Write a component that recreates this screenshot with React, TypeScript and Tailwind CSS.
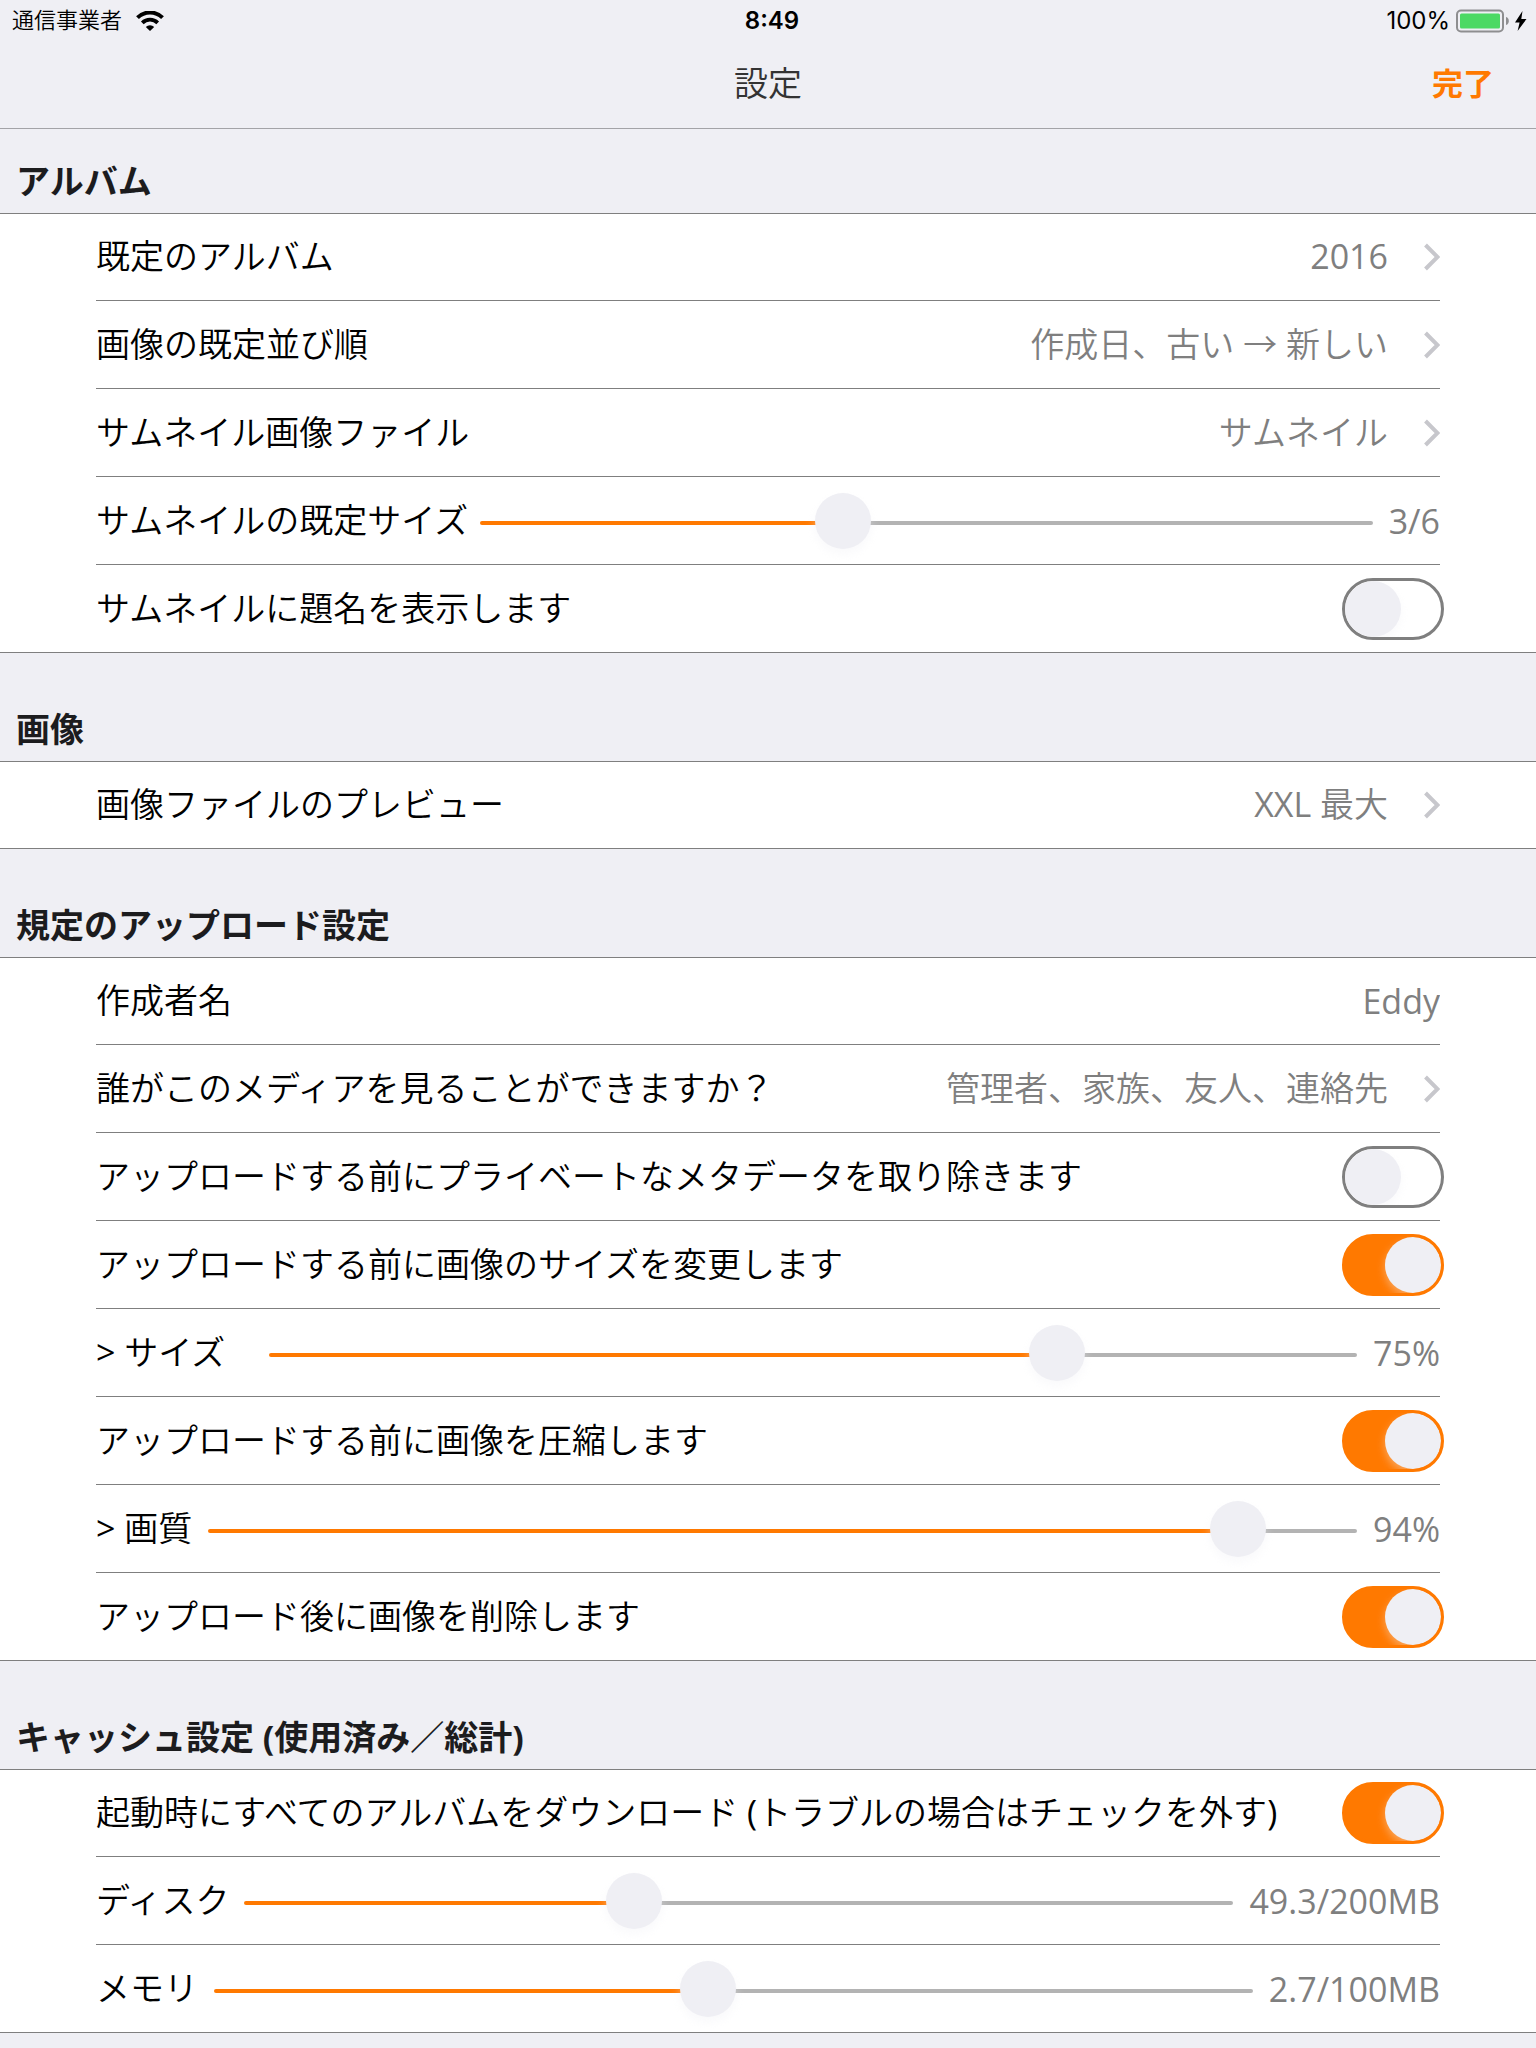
import { useId, useState } from "react";
import type { CSSProperties, ReactNode } from "react";

const rowClass =
  "flex min-h-[88px] w-full items-center border-t border-[#7f7f7f] first:min-h-[86px] first:border-t-0";
const labelClass = "pb-0.5 font-[350]";

/* Japanese glyphs use a demi-light weight; Latin runs stay regular. */
function Mixed({ text }: { text: string }) {
  return (
    <>
      {text.split(/([!-~]+)/).map((part, i) =>
        i % 2 ? (
          <span key={i} className="font-normal">
            {part}
          </span>
        ) : (
          part
        ),
      )}
    </>
  );
}

function Section({ title, first = false, children }: { title: string; first?: boolean; children: ReactNode }) {
  return (
    <section>
      <h2
        className={`border-b border-[#7f7f7f] px-4 pb-2 text-[34px] leading-12 font-bold text-[#1c1c1e] ${
          first ? "pt-7" : "pt-13"
        }`}
      >
        {title}
      </h2>
      <div className="border-b border-[#7f7f7f] bg-white px-24">{children}</div>
    </section>
  );
}

function Chevron() {
  return (
    <svg className="ml-9 h-7 w-4 shrink-0" viewBox="0 0 16 28" fill="none" aria-hidden="true">
      <path d="M1.500 2 13.500 14 1.500 26" stroke="#c7c7cc" strokeWidth="4" />
    </svg>
  );
}

function LinkRow({ label, value }: { label: string; value: string }) {
  return (
    <button type="button" className={`${rowClass} text-left`}>
      <span className={`flex-1 ${labelClass}`}>
        <Mixed text={label} />
      </span>
      <span className="pb-0.5 font-[350] text-[#7f7f7f]">
        <Mixed text={value} />
      </span>
      <Chevron />
    </button>
  );
}

function TextRow({ label, initial }: { label: string; initial: string }) {
  const id = useId();
  const [value, setValue] = useState(initial);
  return (
    <div className={rowClass}>
      <label htmlFor={id} className={labelClass}>
        <Mixed text={label} />
      </label>
      <input
        id={id}
        type="text"
        value={value}
        onChange={(e) => setValue(e.target.value)}
        className="min-w-0 flex-1 bg-transparent text-right text-[#7f7f7f] outline-none"
      />
    </div>
  );
}

function SwitchRow({ label, on = false }: { label: string; on?: boolean }) {
  const id = useId();
  return (
    <div className={rowClass}>
      <label htmlFor={id} className={`flex-1 ${labelClass}`}>
        <Mixed text={label} />
      </label>
      <input
        id={id}
        type="checkbox"
        role="switch"
        defaultChecked={on}
        className="-mr-1 flex h-[62px] w-[102px] shrink-0 appearance-none overflow-hidden rounded-full border-3 border-[#7f7f7f] bg-white before:size-14 before:rounded-full before:bg-[#efeff4] before:shadow-[0_4px_8px_rgba(239,239,244,0.4)] before:content-[''] checked:justify-end checked:border-[#ff7900] checked:bg-[#ff7900]"
      />
    </div>
  );
}

type SliderProps = {
  label: string;
  min: number;
  max: number;
  initial: number;
  format: (v: number) => string;
  gap?: string;
};

function SliderRow({ label, min, max, initial, format, gap = "ml-3.5" }: SliderProps) {
  const id = useId();
  const [value, setValue] = useState(initial);
  const style = { "--f": (value - min) / (max - min) } as CSSProperties;
  return (
    <div className={rowClass}>
      <label htmlFor={id} className={labelClass}>
        <Mixed text={label} />
      </label>
      <input
        id={id}
        type="range"
        min={min}
        max={max}
        value={value}
        onChange={(e) => setValue(Number(e.target.value))}
        style={style}
        className={`${gap} mt-1 mr-4 h-14 min-w-0 flex-1 appearance-none bg-transparent [&::-webkit-slider-runnable-track]:h-1 [&::-webkit-slider-runnable-track]:rounded-full [&::-webkit-slider-runnable-track]:bg-[linear-gradient(to_right,#ff7900_calc(28px+var(--f)*(100%-56px)),#b3b3b3_calc(28px+var(--f)*(100%-56px)))] [&::-webkit-slider-thumb]:-mt-7 [&::-webkit-slider-thumb]:size-14 [&::-webkit-slider-thumb]:appearance-none [&::-webkit-slider-thumb]:rounded-full [&::-webkit-slider-thumb]:bg-[#efeff4] [&::-webkit-slider-thumb]:shadow-[0_5px_10px_rgba(239,239,244,0.4)]`}
      />
      <output htmlFor={id} className="text-[#7f7f7f]">
        {format(value)}
      </output>
    </div>
  );
}

function StatusBar() {
  return (
    <div className="grid h-10 grid-cols-3 items-center pt-0.5 pr-2 pl-3 font-['Inter','Noto_Sans_CJK_JP',sans-serif] text-2xl text-black">
      <div className="flex items-center gap-3.5">
        <span className="text-[22px] font-[350]">通信事業者</span>
        <svg className="h-5 w-7" viewBox="0 0 28 20" fill="none" aria-label="Wi-Fi">
          <path d="M1.500 6.600a17.800 17.800 0 0 1 25 0" stroke="#000" strokeWidth="4" />
          <path d="M6.300 11.800a11 11 0 0 1 15.400 0" stroke="#000" strokeWidth="3.800" />
          <path d="M14 20l-4.200-4.100a6 6 0 0 1 8.400 0z" fill="#000" />
        </svg>
      </div>
      <span className="pl-1 text-center font-semibold">8:49</span>
      <div className="flex items-center justify-end gap-1.5">
        <span>100%</span>
        <svg className="h-6 w-[72px]" viewBox="0 0 72 24" aria-label="Battery">
          <rect x="1" y="1.500" width="46" height="21" rx="4" fill="none" stroke="#8e8e90" strokeWidth="2" />
          <rect x="4" y="4.500" width="40" height="15" rx="1.500" fill="#4cd964" />
          <path d="M50 8c3.800 1 3.800 7 0 8z" fill="#8e8e90" />
          <path d="M66.500 2 59 13.500h4.600l-2 8.500L70.500 10h-5.200z" fill="#000" />
        </svg>
      </div>
    </div>
  );
}

export default function App() {
  return (
    <main
      lang="ja"
      className="min-h-screen bg-[#efeff4] font-['Open_Sans','Noto_Sans_CJK_JP',sans-serif] text-[34px] leading-12 text-black"
    >
      <header className="border-b border-[#a3a3a7]">
        <StatusBar />
        <div className="grid h-22 grid-cols-3 items-center px-11 pb-0.5">
          <h1 className="col-start-2 text-center font-[350] text-[#333333]">設定</h1>
          <button type="button" className="-mr-0.5 justify-self-end text-[31px] font-semibold text-[#ff7900]">
            完了
          </button>
        </div>
      </header>

      <Section title="アルバム" first>
        <LinkRow label="既定のアルバム" value="2016" />
        <LinkRow label="画像の既定並び順" value="作成日、古い → 新しい" />
        <LinkRow label="サムネイル画像ファイル" value="サムネイル" />
        <SliderRow label="サムネイルの既定サイズ" min={1} max={6} initial={3} format={(v) => `${v}/6`} gap="ml-3" />
        <SwitchRow label="サムネイルに題名を表示します" />
      </Section>

      <Section title="画像">
        <LinkRow label="画像ファイルのプレビュー" value="XXL 最大" />
      </Section>

      <Section title="規定のアップロード設定">
        <TextRow label="作成者名" initial="Eddy" />
        <LinkRow label="誰がこのメディアを見ることができますか？" value="管理者、家族、友人、連絡先" />
        <SwitchRow label="アップロードする前にプライベートなメタデータを取り除きます" />
        <SwitchRow label="アップロードする前に画像のサイズを変更します" on />
        <SliderRow label="> サイズ" min={5} max={100} initial={75} format={(v) => `${v}%`} gap="ml-11" />
        <SwitchRow label="アップロードする前に画像を圧縮します" on />
        <SliderRow label="> 画質" min={50} max={98} initial={94} format={(v) => `${v}%`} gap="ml-4" />
        <SwitchRow label="アップロード後に画像を削除します" on />
      </Section>

      <Section title="キャッシュ設定 (使用済み／総計)">
        <SwitchRow label="起動時にすべてのアルバムをダウンロード (トラブルの場合はチェックを外す)" on />
        <SliderRow label="ディスク" min={10} max={500} initial={200} format={(v) => `49.3/${v}MB`} />
        <SliderRow label="メモリ" min={10} max={200} initial={100} format={(v) => `2.7/${v}MB`} gap="ml-4" />
      </Section>
    </main>
  );
}
